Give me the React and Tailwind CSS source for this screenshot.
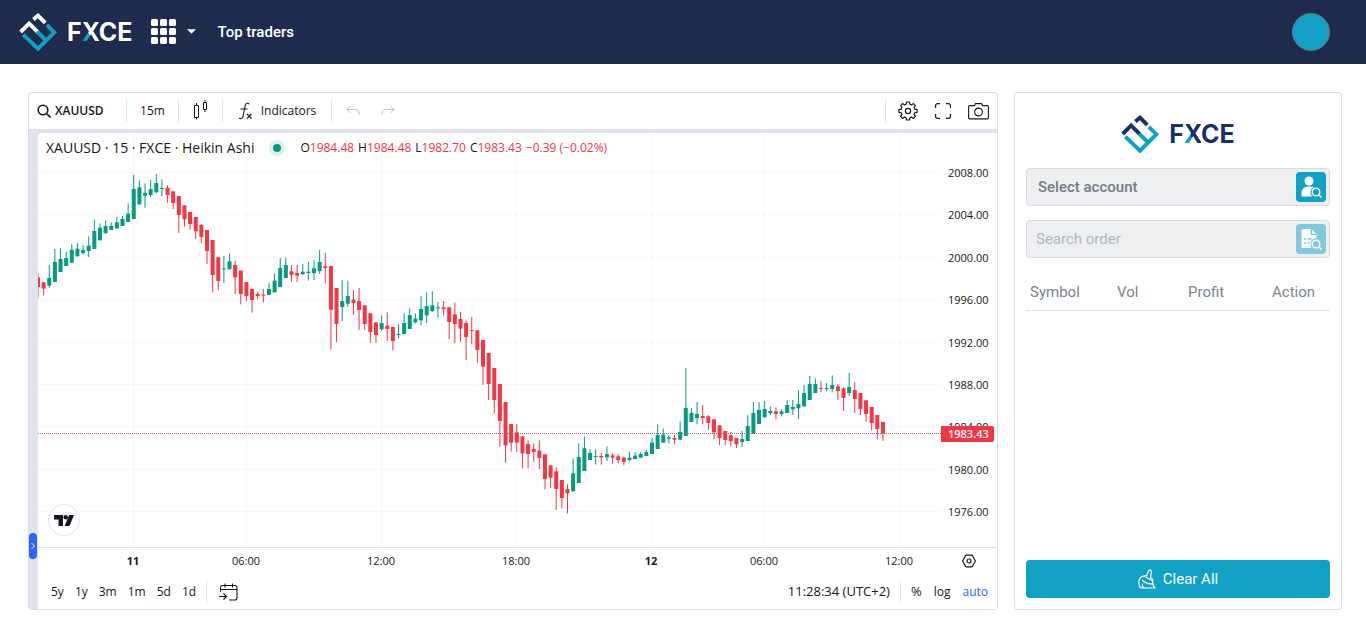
import { useState } from 'react';

const UP = '#089981';
const DOWN = '#f23645';

const PLOT_W = 903;
const PLOT_H = 414;
const STEP = 5.633;

// Each row is [direction, high, body top, body bottom, low].
// Rows are in thirds of a pixel, measured down from the segment's top.
const SEGMENTS = [
  {
    top: 27,
    rows: [
      ['d', 340, 352, 381, 413], ['d', 367, 367, 386, 407], ['u', 315, 354, 377, 384],
      ['u', 267, 306, 366, 366], ['u', 265, 297, 336, 336], ['u', 276, 294, 318, 318],
      ['u', 252, 269, 308, 308], ['u', 249, 266, 289, 289], ['u', 255, 270, 279, 284],
      ['u', 229, 257, 273, 291], ['u', 179, 213, 267, 267], ['u', 190, 203, 241, 241],
      ['u', 181, 198, 220, 220], ['u', 187, 198, 210, 210], ['u', 171, 187, 205, 205],
      ['u', 168, 177, 198, 198], ['u', 130, 161, 186, 186], ['u', 44, 87, 177, 177],
      ['u', 62, 82, 133, 133], ['u', 70, 99, 107, 143], ['u', 59, 87, 105, 111],
      ['u', 42, 69, 97, 100], ['u', 58, 84, 86, 109], ['d', 76, 83, 105, 128],
      ['d', 94, 94, 129, 147], ['d', 108, 108, 165, 219], ['d', 136, 136, 178, 200],
      ['d', 156, 156, 192, 209], ['d', 171, 171, 214, 237], ['d', 192, 195, 231, 249],
      ['d', 210, 210, 273, 312], ['d', 240, 240, 345, 397], ['d', 292, 292, 363, 391],
      ['u', 287, 325, 328, 369], ['u', 281, 304, 328, 328], ['d', 302, 315, 352, 403],
      ['d', 332, 332, 402, 433],
    ],
  },
  {
    top: 97,
    rows: [
      ['d', 156, 156, 198, 214], ['d', 177, 177, 210, 248], ['d', 186, 192, 198, 208],
      ['d', 177, 194, 197, 217], ['u', 159, 177, 195, 195], ['u', 130, 152, 187, 187],
      ['u', 84, 114, 171, 171], ['u', 82, 105, 144, 144], ['d', 105, 124, 135, 155],
      ['d', 105, 129, 137, 156], ['u', 102, 125, 132, 135], ['u', 96, 125, 129, 152],
      ['u', 91, 115, 129, 150], ['u', 60, 96, 123, 132], ['d', 68, 109, 114, 160],
      ['d', 108, 108, 239, 358], ['d', 174, 174, 282, 336], ['u', 150, 213, 231, 273],
      ['u', 152, 198, 221, 231], ['d', 180, 209, 219, 254], ['d', 174, 213, 240, 300],
      ['d', 226, 226, 282, 300], ['d', 250, 250, 306, 338], ['d', 277, 277, 315, 338],
      ['u', 256, 279, 298, 303], ['d', 247, 287, 297, 332], ['d', 291, 291, 333, 361],
      ['u', 282, 312, 315, 325], ['u', 250, 279, 312, 312], ['u', 235, 255, 297, 297],
      ['u', 250, 266, 277, 280], ['u', 198, 237, 271, 285], ['u', 187, 228, 256, 279],
      ['u', 184, 226, 243, 246], ['u', 216, 232, 234, 262], ['d', 213, 232, 237, 257],
      ['d', 232, 232, 276, 328], ['d', 217, 253, 282, 339], ['d', 246, 267, 296, 335],
      ['d', 272, 279, 321, 390], ['d', 261, 300, 303, 343],
    ],
  },
  {
    top: 157,
    rows: [
      ['d', 121, 121, 180, 219], ['d', 150, 150, 230, 285], ['d', 189, 189, 282, 330],
      ['d', 234, 234, 330, 371], ['d', 282, 282, 393, 470], ['d', 336, 336, 466, 518],
      ['d', 402, 402, 458, 485], ['d', 402, 427, 458, 486], ['d', 439, 439, 490, 535],
      ['d', 451, 462, 492, 535], ['d', 460, 477, 486, 515], ['d', 451, 482, 504, 537],
      ['d', 493, 493, 567, 598], ['d', 526, 526, 563, 594], ['d', 532, 544, 597, 660],
      ['d', 570, 570, 624, 655], ['d', 583, 597, 610, 670], ['u', 505, 550, 604, 604],
      ['u', 460, 501, 579, 579], ['u', 440, 475, 543, 543], ['u', 478, 489, 510, 510],
      ['u', 478, 498, 500, 524], ['d', 489, 498, 502, 524], ['u', 469, 492, 502, 513],
      ['d', 490, 496, 503, 521], ['d', 492, 499, 510, 520], ['d', 501, 503, 516, 526],
      ['u', 486, 503, 510, 513], ['u', 486, 497, 507, 507], ['u', 486, 492, 503, 503],
      ['u', 480, 486, 498, 498], ['u', 443, 458, 492, 492], ['u', 403, 435, 477, 477],
      ['u', 416, 434, 458, 458],
    ],
  },
  {
    top: 217,
    rows: [
      ['u', 255, 262, 266, 280], ['d', 255, 264, 269, 283], ['u', 214, 246, 269, 270],
      ['u', 54, 174, 258, 258], ['u', 174, 189, 216, 216], ['u', 156, 192, 204, 223],
      ['d', 165, 198, 204, 223], ['d', 195, 199, 219, 240], ['d', 208, 208, 247, 269],
      ['d', 226, 226, 264, 285], ['d', 243, 243, 270, 285], ['d', 246, 256, 273, 290],
      ['d', 264, 264, 283, 294], ['u', 243, 267, 276, 291], ['u', 196, 228, 273, 273],
      ['u', 156, 189, 251, 251], ['u', 156, 180, 222, 222], ['u', 153, 177, 202, 202],
      ['u', 169, 183, 189, 196], ['d', 172, 184, 192, 208], ['u', 177, 184, 192, 199],
      ['u', 150, 165, 189, 189], ['u', 150, 171, 178, 195], ['u', 121, 162, 175, 207],
      ['u', 105, 129, 169, 169], ['u', 78, 102, 150, 150], ['u', 85, 102, 129, 129],
      ['d', 93, 114, 117, 126], ['u', 99, 114, 117, 123], ['u', 76, 105, 117, 127],
      ['d', 102, 109, 123, 150], ['d', 112, 115, 144, 183], ['u', 69, 111, 129, 138],
      ['d', 96, 120, 147, 189], ['d', 129, 129, 177, 195], ['d', 151, 151, 192, 215],
      ['d', 171, 171, 219, 240], ['d', 195, 195, 237, 267], ['d', 216, 216, 251, 273],
    ],
  },
];

const candles = SEGMENTS.flatMap(({ top, rows }) =>
  rows.map(([dir, ...levels]) => [dir, ...levels.map((v) => top + v / 3)])
);

const priceTicks = [2008, 2004, 2000, 1996, 1992, 1988, 1984, 1980, 1976].map((price) => ({
  label: price.toFixed(2),
  y: 40 + (2008 - price) * 10.6,
}));

const timeTicks = [
  { label: '11', x: 95, bold: true },
  { label: '06:00', x: 208 },
  { label: '12:00', x: 343 },
  { label: '18:00', x: 478 },
  { label: '12', x: 613, bold: true },
  { label: '06:00', x: 726 },
  { label: '12:00', x: 861 },
];

const LAST_Y = 300;

function Logo({ dark }) {
  const main = dark ? '#192f65' : '#ffffff';
  return (
    <span className="flex items-center gap-[10px]">
      <svg viewBox="0 0 114 116" className="w-[38px] h-[38px]" fill="none" strokeWidth="12">
        <g stroke={main}>
          <path d="M4 58 L30 32 L57 59" />
          <path d="M43 20 L57 8 L79 30" />
        </g>
        <g stroke="#0fa0c4">
          <path d="M12 66 L57 109 L107 59 L84 36" />
          <path d="M54 57 L82 84" />
        </g>
      </svg>
      <span
        className={`font-['Inter',sans-serif] text-[25px] leading-6 font-bold ${dark ? 'text-[#192f65]' : 'text-white'}`}
      >
        F
        <span
          className={`bg-clip-text text-transparent bg-linear-to-tr from-[#0fa0c4] from-42% to-42% ${dark ? 'to-[#192f65]' : 'to-white'}`}
        >
          X
        </span>
        CE
      </span>
    </span>
  );
}

function Header() {
  return (
    <header className="flex items-center h-16 pl-[19px] pr-9 pb-px bg-[#1e2b4c] text-white font-['Roboto',sans-serif]">
      <a href="#home" aria-label="FXCE">
        <Logo />
      </a>
      <button className="flex items-center gap-[11px] ml-[18px]" aria-label="Apps">
        <svg viewBox="0 0 25 25" className="w-[25px] h-[25px]" fill="currentColor">
          {[0, 9, 18].map((y) =>
            [0, 9, 18].map((x) => <rect key={`${x}-${y}`} x={x} y={y} width="7" height="7" rx="1.5" />)
          )}
        </svg>
        <svg viewBox="0 0 10 5" className="w-[9px] h-[5px]" fill="currentColor">
          <path d="M0 0h10L5 5z" />
        </svg>
      </button>
      <nav className="ml-[22px]">
        <a href="#top-traders" className="text-[15px] font-medium">Top traders</a>
      </nav>
      <button
        aria-label="Profile"
        className="ml-auto w-[38px] h-[38px] rounded-full bg-[#11a1c5] border border-[#7b6f80]"
      />
    </header>
  );
}

function Divider() {
  return <span className="w-px h-[22px] bg-[#e0e3eb]" />;
}

function Toolbar() {
  return (
    <div className="flex items-center h-9 font-medium text-[#131722]">
      <button className="flex items-center gap-1 w-[97px] pl-2 font-semibold">
        <svg viewBox="0 0 14 14" className="w-[14px] h-[14px]" fill="none" stroke="currentColor" strokeWidth="1.6">
          <circle cx="6" cy="6" r="4.8" />
          <path d="M9.5 9.5l4 4" />
        </svg>
        XAUUSD
      </button>
      <Divider />
      <button className="w-[51px]">15m</button>
      <Divider />
      <button className="flex justify-center w-[43px]" aria-label="Chart type">
        <svg viewBox="0 0 15 22" className="w-[15px] h-[22px]" fill="none" stroke="currentColor">
          <path d="M1.500 5.500h4v12h-4zM3.500 3v2.500M3.500 17.500v2M10.500 2.500h3v7h-3zM12 0v2.500M12 9.500v2.500" />
        </svg>
      </button>
      <Divider />
      <button className="flex items-center justify-center gap-2 w-[108px]">
        <svg viewBox="0 0 15 18" className="w-[15px] h-[18px]" fill="none" stroke="currentColor" strokeWidth="1.1">
          <path d="M11 2.200C10.500 .8 7.800 .6 7.200 3.500L5 14.500C4.500 17 2.200 17 1 15.800M2.500 7h7" />
          <path d="M9 12l4.500 4.500M13.500 12L9 16.500" />
        </svg>
        Indicators
      </button>
      <Divider />
      <button className="ml-[14px] text-[#b8bbc4]" aria-label="Undo">
        <svg viewBox="0 0 14 12" className="w-[14px] h-3" fill="none" stroke="currentColor">
          <path d="M4.500 1L1 4.500 4.500 8M1 4.500h7.500c3 0 4.500 1.500 4.500 3.500v2" />
        </svg>
      </button>
      <button className="ml-[21px] text-[#b8bbc4]" aria-label="Redo">
        <svg viewBox="0 0 14 12" className="w-[14px] h-3" fill="none" stroke="currentColor">
          <path d="M9.500 1L13 4.500 9.500 8M13 4.500H5.500C2.500 4.500 1 6 1 8v2" />
        </svg>
      </button>

      <div className="flex items-center ml-auto pr-2">
        <Divider />
        <button className="ml-3" aria-label="Chart settings">
          <svg viewBox="0 0 20 20" className="w-5 h-5" fill="none" stroke="currentColor" strokeWidth="1.2" strokeLinejoin="round">
            <circle cx="10" cy="10" r="2.600" />
            <path d="M8.600 1h2.800l.5 2.300 1.500.6 2-1.300 2 2-1.300 2 .6 1.500 2.300.5v2.800l-2.300.5-.6 1.500 1.300 2-2 2-2-1.300-1.500.6-.5 2.300H8.600l-.5-2.300-1.500-.6-2 1.300-2-2 1.300-2-.6-1.500L1 11.400V8.600l2.300-.5.6-1.500-1.300-2 2-2 2 1.300 1.500-.6z" />
          </svg>
        </button>
        <button className="ml-[17px]" aria-label="Fullscreen">
          <svg viewBox="0 0 16 16" className="w-4 h-4" fill="none" stroke="currentColor" strokeWidth="1.2">
            <path d="M5 .6H2.600a2 2 0 0 0-2 2V5M11 .6h2.400a2 2 0 0 1 2 2V5M5 15.400H2.600a2 2 0 0 1-2-2V11M11 15.400h2.400a2 2 0 0 0 2-2V11" />
          </svg>
        </button>
        <button className="ml-[17px]" aria-label="Take a snapshot">
          <svg viewBox="0 0 21 17" className="w-[21px] h-[17px]" fill="none" stroke="currentColor" strokeWidth="1.100">
            <path d="M6.500 2.600L7.500.6h6l1 2H19a1.400 1.400 0 0 1 1.400 1.400v10.500a1.400 1.400 0 0 1-1.400 1.400H2A1.400 1.400 0 0 1 .6 14.500V4A1.400 1.400 0 0 1 2 2.600z" />
            <circle cx="10.500" cy="9" r="3.900" />
          </svg>
        </button>
      </div>
    </div>
  );
}

function Legend() {
  const values = [
    ['O', '1984.48'],
    ['H', '1984.48'],
    ['L', '1982.70'],
    ['C', '1983.43'],
  ];
  return (
    <div className="absolute left-2 top-[5px] flex items-center text-[#131722]">
      <span className="text-sm">XAUUSD · 15 · FXCE · Heikin Ashi</span>
      <span className="flex items-center justify-center w-4 h-4 ml-[15px] mr-[15px] rounded-full bg-[#daf0ed]">
        <span className="w-2 h-2 rounded-full bg-[#089981]" />
      </span>
      <span className="flex gap-1 text-xs">
        {values.map(([name, value]) => (
          <span key={name}>
            {name}
            <span className="text-[#f23645]">{value}</span>
          </span>
        ))}
        <span className="text-[#f23645]">−0.39 (−0.02%)</span>
      </span>
    </div>
  );
}

function Candles() {
  return (
    <svg
      viewBox={`0 0 ${PLOT_W} ${PLOT_H}`}
      preserveAspectRatio="none"
      className="w-full h-full"
      role="img"
      aria-label="XAUUSD Heikin Ashi candles"
    >
      <g stroke="#f7f7f8">
        {priceTicks.map((t) => (
          <path key={t.label} d={`M0 ${Math.round(t.y) - 0.5}H${PLOT_W}`} />
        ))}
        {timeTicks.map((t) => (
          <path key={t.x} d={`M${t.x + 0.5} 0V${PLOT_H}`} />
        ))}
      </g>
      {candles.map(([dir, high, top, bottom, low], i) => {
        const x = i * STEP;
        return (
          <g key={i} fill={dir === 'u' ? UP : DOWN}>
            <rect x={x - 0.5} y={high} width="1" height={low - high} />
            <rect x={x - 2} y={top} width="4" height={Math.max(bottom - top, 1)} />
          </g>
        );
      })}
      <path d={`M0 ${LAST_Y + 0.5}H${PLOT_W}`} stroke="#a0616a" strokeDasharray="1 1" />
    </svg>
  );
}

function ChartArea() {
  return (
    <div className="flex h-[414px]">
      <div className="relative flex-1 min-w-0">
        <Candles />
        <Legend />
        <a
          href="#tradingview"
          aria-label="TradingView"
          className="absolute left-[10px] bottom-[11px] flex items-center justify-center w-8 h-8 rounded-full bg-white border border-[#e0e3eb]"
        >
          <svg viewBox="0 0 20 11" className="w-5 h-[11px]" fill="#131722">
            <path d="M0 0h9v11H4.500V4.500H0z" />
            <circle cx="11.700" cy="2.200" r="2.200" />
            <path d="M15.200 0H20l-4.500 11h-4.900z" />
          </svg>
        </a>
      </div>
      <div className="relative w-14 text-[11px] leading-4 text-[#131722]">
        {priceTicks.map((t) => (
          <span key={t.label} className="absolute left-[7px] -translate-y-1/2" style={{ top: t.y }}>
            {t.label}
          </span>
        ))}
        <span
          className="absolute left-0 w-[53px] pl-[7px] -translate-y-1/2 rounded-r-xs bg-[#f23645] text-white font-semibold"
          style={{ top: LAST_Y + 1 }}
        >
          1983.43
        </span>
      </div>
    </div>
  );
}

function TimeAxis() {
  return (
    <div className="flex items-center h-[27px] border-t border-[#e0e3eb] text-[11px] leading-4 text-[#131722]">
      <div className="relative flex-1 h-4">
        {timeTicks.map((t) => (
          <span
            key={t.x}
            className={`absolute -translate-x-1/2 ${t.bold ? 'font-bold' : ''}`}
            style={{ left: `${(t.x / PLOT_W) * 100}%` }}
          >
            {t.label}
          </span>
        ))}
      </div>
      <button className="flex justify-center w-14" aria-label="Axis settings">
        <svg viewBox="0 0 14 14" className="w-[14px] h-[14px]" fill="none" stroke="#131722" strokeWidth="1.200">
          <path d="M3.800 1.200h6.400L13.400 7l-3.200 5.800H3.800L.6 7z" strokeLinejoin="round" />
          <circle cx="7" cy="7" r="2" />
        </svg>
      </button>
    </div>
  );
}

function RangeBar() {
  const ranges = ['5y', '1y', '3m', '1m', '5d', '1d'];
  return (
    <div className="flex items-center h-[35px] pl-[13px] pr-[9px] font-medium text-[#131722]">
      <div className="flex gap-[11px] mr-[10px]">
        {ranges.map((r) => (
          <button key={r}>{r}</button>
        ))}
      </div>
      <Divider />
      <button className="ml-3" aria-label="Go to date">
        <svg viewBox="0 0 19 18" className="w-[19px] h-[18px]" fill="none" stroke="currentColor" strokeWidth="1.100">
          <path d="M1.500 9V4.500a2 2 0 0 1 2-2h12.500a2 2 0 0 1 2 2v10.500a2 2 0 0 1-2 2h-6M1.500 6.500h16.500M6 .5v4M13.500 .5v4M0 13.500h7M4.500 10.500l3 3-3 3" />
        </svg>
      </button>
      <button className="ml-auto mr-[10px] text-[13px]">11:28:34 (UTC+2)</button>
      <Divider />
      <button className="ml-[10px] text-[13px]">%</button>
      <button className="ml-3">log</button>
      <button className="ml-3 text-[#2962ff]">auto</button>
    </div>
  );
}

function ChartPanel() {
  return (
    <section className="flex-1 min-w-0 border border-[#d9dce5] rounded overflow-hidden text-xs font-['Open_Sans','Noto_Sans',sans-serif]">
      <Toolbar />
      <div className="flex pt-1 bg-[#e0e3eb]">
        <div className="flex flex-col justify-end w-[9px] pb-[50px]">
          <button
            aria-label="Show drawings toolbar"
            className="flex items-center justify-center w-2 h-[26px] rounded bg-[#2962ff] text-white"
          >
            <svg viewBox="0 0 4 8" className="w-1 h-2" fill="none" stroke="currentColor">
              <path d="M.5 1l3 3-3 3" />
            </svg>
          </button>
        </div>
        <div className="flex-1 min-w-0 bg-white rounded-tl">
          <ChartArea />
          <TimeAxis />
          <RangeBar />
        </div>
      </div>
    </section>
  );
}

function AccountPanel() {
  const [account, setAccount] = useState('');

  return (
    <aside className="flex flex-col w-[328px] px-[11px] pt-[22px] pb-[11px] border border-[#d9dce5] rounded text-[15px] text-[#6c757d] font-['Roboto',sans-serif]">
      <div className="flex justify-center">
        <Logo dark />
      </div>

      {/* Account and order lookup */}
      <div className="flex items-center h-[38px] mt-[15px] pl-[11px] pr-[3px] bg-[#eeeff1] border border-[#d6dae2] rounded">
        <input
          aria-label="Select account"
          placeholder="Select account"
          value={account}
          onChange={(e) => setAccount(e.target.value)}
          className="flex-1 min-w-0 font-medium bg-transparent outline-none placeholder:text-[#747c86]"
        />
        <button aria-label="Find account" className="flex items-center justify-center w-[30px] h-[30px] rounded-sm bg-[#11a1c5]">
          <svg viewBox="0 0 24 24" className="w-6 h-6" fill="#fff">
            <circle cx="10" cy="6" r="4.500" />
            <path d="M2.500 21.500V18c0-4 3-6.500 6.500-6.500h3c1.200 0 2 .2 2.800.6A6 6 0 0 0 13 21.500z" />
            <circle cx="17" cy="17" r="3.800" fill="none" stroke="#fff" strokeWidth="1.400" />
            <path d="M19.800 19.800l2.700 2.700" stroke="#fff" strokeWidth="1.400" />
          </svg>
        </button>
      </div>
      <div className="flex items-center h-[38px] mt-[14px] pl-[9px] pr-[3px] bg-[#eeeff1] border border-[#d6dae2] rounded">
        <input
          aria-label="Search order"
          placeholder="Search order"
          disabled
          className="flex-1 min-w-0 bg-transparent outline-none placeholder:text-[#b1b6bf]"
        />
        <button disabled aria-label="Find order" className="flex items-center justify-center w-[30px] h-[30px] rounded-sm bg-[#80c8dc]">
          <svg viewBox="0 0 24 24" className="w-6 h-6" fill="#fff">
            <path d="M4 2h7.500v4.500A1.500 1.500 0 0 0 13 8h4.500v3a6.500 6.500 0 0 0-5 10H4A1.500 1.500 0 0 1 2.500 19.500v-16A1.500 1.500 0 0 1 4 2z" />
            <path d="M13 2.500l4 4.200h-4z" />
            <path d="M5 12h2M8.500 12h4M5 16h2M8.500 16h2" stroke="#80c8dc" strokeWidth="1.400" />
            <circle cx="17" cy="17" r="3.800" fill="none" stroke="#fff" strokeWidth="1.400" />
            <path d="M19.800 19.800l2.700 2.700" stroke="#fff" strokeWidth="1.400" />
          </svg>
        </button>
      </div>

      <table className="w-full mt-4 table-fixed text-left">
        <thead>
          <tr className="h-9 border-b border-[#dee2e6] text-[#7b848e]">
            <th className="w-[87px] pl-1 font-normal">Symbol</th>
            <th className="w-[71px] pl-1 font-normal">Vol</th>
            <th className="w-[84px] pl-1 font-normal">Profit</th>
            <th className="pl-1 font-normal">Action</th>
          </tr>
        </thead>
        <tbody />
      </table>

      <button
        onClick={() => setAccount('')}
        className="flex items-center justify-center gap-[7px] h-[38px] mt-auto rounded bg-[#11a1c5] text-white"
      >
        <svg viewBox="0 0 18 20" className="w-[18px] h-5" fill="none" stroke="currentColor" strokeWidth="1.200" strokeLinejoin="round" strokeLinecap="round">
          <path d="M8.500 7L10.500 2c.6-1.500 3.200-1 2.900.9L12.500 8.500l1.400 1c.9.6 1.100 1.500.8 2.300L6 7.200c.6-.9 1.500-.9 2.500-.2z" />
          <path d="M6 7.200C3 7 .8 10 .8 13.500c0 3 1 5.500 3 5.500H17.200c-1.700-1.500-2.700-4-2.500-7.200" />
          <path d="M5.500 19c-1-1-1.300-2.500-1-4M4.500 11.500c2.500 2.500 6 3.500 10.500 3.500" />
        </svg>
        Clear All
      </button>
    </aside>
  );
}

export default function App() {
  return (
    <div className="min-h-screen bg-white">
      <Header />
      <main className="flex gap-4 pl-7 pr-6 pt-7 pb-3">
        <ChartPanel />
        <AccountPanel />
      </main>
    </div>
  );
}
